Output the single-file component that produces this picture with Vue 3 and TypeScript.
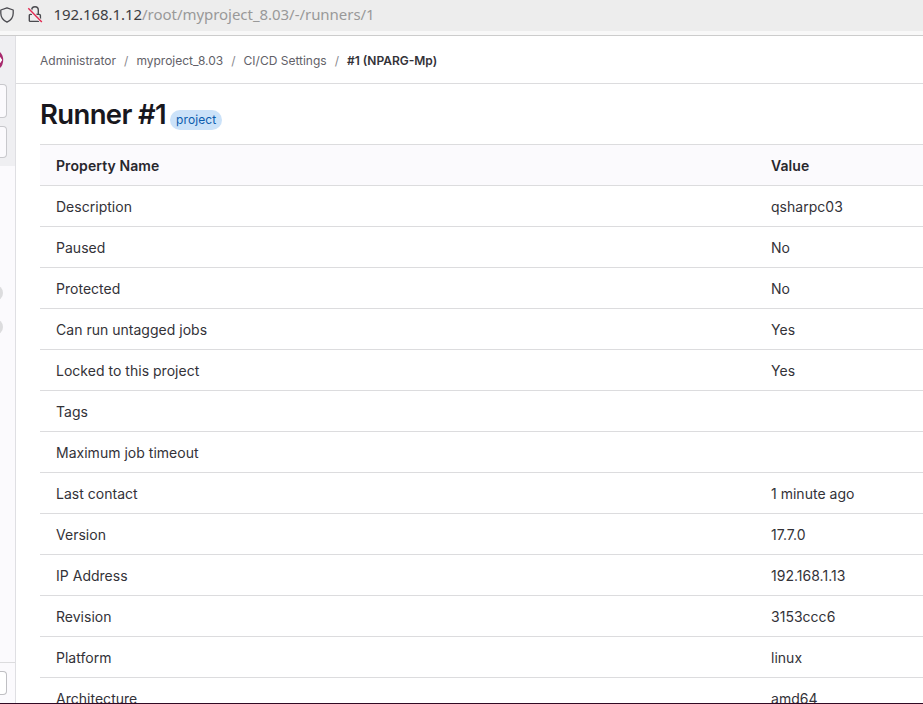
<script setup lang="ts">
interface Property {
  name: string
  value: string
}

const crumbs: string[] = ['Administrator', 'myproject_8.03', 'CI/CD Settings']

const properties: Property[] = [
  { name: 'Description', value: 'qsharpc03' },
  { name: 'Paused', value: 'No' },
  { name: 'Protected', value: 'No' },
  { name: 'Can run untagged jobs', value: 'Yes' },
  { name: 'Locked to this project', value: 'Yes' },
  { name: 'Tags', value: '' },
  { name: 'Maximum job timeout', value: '' },
  { name: 'Last contact', value: '1 minute ago' },
  { name: 'Version', value: '17.7.0' },
  { name: 'IP Address', value: '192.168.1.13' },
  { name: 'Revision', value: '3153ccc6' },
  { name: 'Platform', value: 'linux' },
  { name: 'Architecture', value: 'amd64' },
]
</script>

<template>
  <div class="window">
    <header class="address-bar">
      <svg class="shield" width="16" height="16" viewBox="0 0 16 16" fill="none" stroke="#4a4a4f" stroke-width="1.3" stroke-linejoin="round">
        <path d="M8 .8 14.2 3v3.2c0 4-2.2 7-6.2 9-4-2-6.2-5-6.2-9V3z" />
      </svg>
      <svg class="lock" width="16" height="18" viewBox="0 0 16 18" fill="none">
        <path d="M4.7 4.5V4a3.3 3.3 0 0 1 6.6 0v4.2" stroke="#4a4a4f" stroke-width="1.4" />
        <path d="M5 8.4H3.3q-1 0-1 1v5q0 1 1 1h9M9 8.4h3.2q1.2 0 1.2 1.2v3.6" stroke="#4a4a4f" stroke-width="1.4" />
        <path d="M1.3 2.2 14.8 16" stroke="#ededed" stroke-width="3" />
        <path d="M1.3 2.2 14.8 16" stroke="#e22850" stroke-width="1.4" />
      </svg>
      <div class="url"><span class="host">192.168.1.12</span><span class="path">/root/myproject_8.03/-/runners/1</span></div>
    </header>
    <div class="toolbar-edge"></div>

    <div class="page">
      <aside class="sidebar">
        <div class="sidebar-top">
          <svg class="logo" width="4" height="18" viewBox="0 0 4 18">
            <path d="M0 1Q3.2 4 3.2 9T0 17V12L1.8 9.6V8.4L0 6Z" fill="#a82a6e" />
            <path d="M0 6 1.8 8.4V9.6L0 12Z" fill="#fff" />
          </svg>
          <div class="control control-first"></div>
          <div class="control control-second"></div>
        </div>
        <div class="sidebar-nav">
          <span class="count"></span>
          <span class="count"></span>
        </div>
        <div class="sidebar-footer">
          <div class="control control-help"></div>
        </div>
      </aside>

      <main class="content">
        <nav class="breadcrumbs">
          <template v-for="crumb in crumbs" :key="crumb">
            <span>{{ crumb }}</span><span class="separator">/</span>
          </template>
          <strong>#1 (NPARG-Mp)</strong>
        </nav>

        <div class="heading">
          <h1>Runner #1</h1>
          <span class="badge">project</span>
        </div>

        <div class="table">
          <div class="row head">
            <div>Property Name</div>
            <div>Value</div>
          </div>
          <div v-for="property in properties" :key="property.name" class="row">
            <div>{{ property.name }}</div>
            <div>{{ property.value }}</div>
          </div>
        </div>
      </main>
    </div>
    <div class="window-edge"></div>
  </div>
</template>

<style>
body {
  background: #fff;
  overflow: hidden;
}
</style>

<style scoped>
* {
  box-sizing: border-box;
}

.window {
  width: 100%;
  height: 704px;
  display: flex;
  flex-direction: column;
  overflow: hidden;
  font-family: Inter, "Liberation Sans", sans-serif;
  font-size: 14px;
  color: #333238;
}

.address-bar {
  height: 31px;
  flex: none;
  display: flex;
  align-items: center;
  background: #ededed;
}

.shield {
  flex: none;
  margin: 0 0 1px -1px;
}

.lock {
  flex: none;
  margin: 0 0 1px 12px;
}

.url {
  margin: 0 0 3px 10.5px;
  font-family: "Noto Sans", sans-serif;
  font-size: 15px;
  line-height: 20px;
  white-space: nowrap;
}

.host {
  display: inline-block;
  letter-spacing: -0.06px;
  color: #3d3d42;
}

.path {
  display: inline-block;
  letter-spacing: -0.04px;
  color: #999;
}

.toolbar-edge {
  height: 5px;
  flex: none;
  background: #f8f8f8;
  border-bottom: 1px solid #ccc;
}

.page {
  flex: 1;
  min-height: 0;
  display: flex;
  overflow: hidden;
}

.sidebar {
  width: 16px;
  flex: none;
  display: flex;
  flex-direction: column;
  overflow: hidden;
  background: #fbfafd;
  border-right: 1px solid #dfdfe3;
}

.sidebar-top {
  height: 130px;
  flex: none;
  padding-top: 15px;
  background: #efeff2;
}

.logo {
  display: block;
}

.control {
  width: 7px;
  background: #fbfafd;
  border: 1px solid #c8c8cc;
  border-left: 0;
  border-radius: 0 4px 4px 0;
}

.control-first {
  height: 34px;
  margin-top: 15px;
}

.control-second {
  height: 32px;
  margin-top: 8px;
}

.sidebar-nav {
  flex: 1;
  display: flex;
  flex-direction: column;
  gap: 18px;
  padding-top: 119px;
}

.count {
  width: 16px;
  height: 16px;
  margin-left: -13px;
  background: #dcdcde;
  border-radius: 8px;
}

.sidebar-footer {
  height: 41px;
  flex: none;
  padding-top: 8px;
  border-top: 1px solid #dcdcde;
}

.control-help {
  height: 24px;
  background: #fff;
  border-color: #bfbfc3;
}

.content {
  flex: 1;
  min-width: 0;
  overflow: hidden;
}

.breadcrumbs {
  height: 48px;
  display: flex;
  align-items: center;
  padding: 2px 0 0 24px;
  border-bottom: 1px solid #dcdcde;
  font-size: 12px;
  color: #626168;
  white-space: nowrap;
}

.separator {
  margin: 0 8px;
  color: #89888d;
}

.breadcrumbs strong {
  font-weight: 600;
  color: #333238;
}

.heading {
  height: 60px;
  display: flex;
  align-items: flex-start;
  padding: 12px 0 0 24px;
}

h1 {
  margin: 0;
  font-size: 27.5px;
  line-height: 36px;
  font-weight: 600;
  letter-spacing: -0.64px;
  color: #18171d;
  white-space: nowrap;
}

.badge {
  height: 20px;
  margin: 14px 0 0 4px;
  padding: 0 6px;
  border-radius: 10px;
  background: #cbe2f9;
  color: #0b5cad;
  font-size: 12px;
  letter-spacing: 0.1px;
  line-height: 20px;
}

.table {
  margin-left: 24px;
  border-top: 1px solid #dcdcde;
}

.row {
  height: 41px;
  display: grid;
  grid-template-columns: 715px 1fr;
  align-items: center;
  padding-left: 16px;
  border-bottom: 1px solid #dcdcde;
  letter-spacing: 0.02px;
  white-space: nowrap;
}

.head {
  background: #fbfafd;
  font-weight: 600;
  letter-spacing: 0.09px;
  color: #28272d;
}

.window-edge {
  height: 1px;
  flex: none;
  background: #300a24;
}
</style>
